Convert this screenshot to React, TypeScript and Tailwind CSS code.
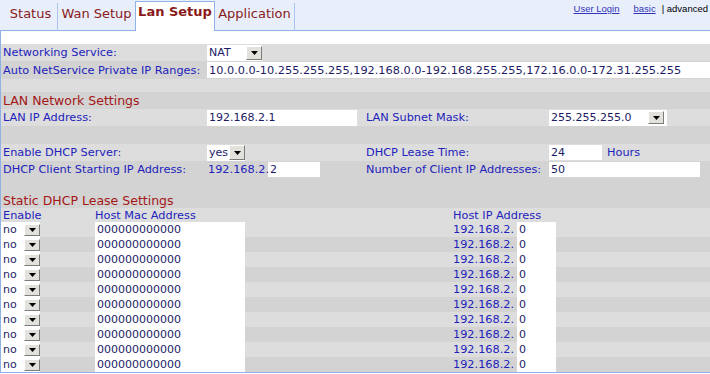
const LIGHT = "bg-[#dddddd]";
const DARK = "bg-[#d3d3d3]";

function Arrow({ h = "h-[14px]" }: { h?: string }) {
  return (
    <span className={"flex w-[16px] shrink-0 items-center justify-center border border-t-white border-l-white border-r-[#7c7c7c] border-b-[#7c7c7c] bg-[#e3e1dc] " + h}>
      <svg width="7" height="4" viewBox="0 0 7 4">
        <path d="M0 0h7L3.5 4z" fill="#000" />
      </svg>
    </span>
  );
}

function Select({ text, cls, arrow }: { text: string; cls: string; arrow?: string }) {
  return (
    <div className={"flex shrink-0 items-center justify-between bg-white pl-[2px] text-[#1c1c66] " + cls}>
      <span>{text}</span>
      <Arrow h={arrow} />
    </div>
  );
}

function Row({ cls, children }: { cls: string; children?: React.ReactNode }) {
  return <div className={"flex items-center " + cls}>{children}</div>;
}

function Label({ w, children }: { w: string; children: React.ReactNode }) {
  return <div className={"shrink-0 text-[11.3px] text-[#2222bb] " + w}>{children}</div>;
}

function Field({ w, h = "h-[16px]", children }: { w: string; h?: string; children?: React.ReactNode }) {
  return (
    <div className={"flex shrink-0 items-center bg-white pl-[2px] text-[#1c1c66] " + w + " " + h}>
      {children}
    </div>
  );
}

function TopBar() {
  return (
    <div className="flex h-[31px] border-b border-[#8fb2e6] bg-[#e8effb]">
      <div className="-mb-px flex items-end pl-[4px] font-['DejaVu_Sans',sans-serif] text-[13px] leading-[16px] text-[#8a1a1a]">
        <div className="h-[28px] w-[54px] border-r border-[#a9c4ee] pt-[3px] text-center">Status</div>
        <div className="h-[28px] w-[77px] pt-[3px] text-center">Wan Setup</div>
        <div className="h-[30px] w-[80px] border-x border-t border-[#8fb2e6] bg-white pt-[2px] text-center font-bold">Lan Setup</div>
        <div className="h-[28px] w-[80px] border-r border-[#a9c4ee] pt-[3px] text-center">Application</div>
      </div>
      <div className="ml-auto flex pr-[2px] pt-[3px] font-['Liberation_Sans',Arial,sans-serif] text-[9.5px] leading-[11px]">
        <span className="text-[#3333bb] underline">User Login</span>
        <span className="ml-[14px] text-[#3333bb] underline">basic</span>
        <span className="ml-[6px] text-black">| advanced</span>
      </div>
    </div>
  );
}

function LeaseRow({ bg }: { bg: string }) {
  return (
    <Row cls={"h-[15px] " + bg}>
      <Select text="no" cls="h-[15px] w-[39px]" arrow="h-[12px]" />
      <div className="w-[55px] shrink-0" />
      <Field w="w-[150px]" h="h-[15px]">000000000000</Field>
      <div className="w-[208px] shrink-0" />
      <Label w="w-[64px]">192.168.2.</Label>
      <Field w="w-[39px] pl-[1px]" h="h-[15px]">0</Field>
    </Row>
  );
}

export default function App() {
  const rows = [LIGHT, DARK, LIGHT, DARK, LIGHT, DARK, LIGHT, DARK, LIGHT, DARK];
  return (
    <div className="h-[374px] w-[710px] overflow-hidden bg-white font-['DejaVu_Sans',Verdana,sans-serif] text-[11px] leading-[13px]">
      <TopBar />
      <div className="border-b border-l border-[#8fb2e6]">
        <div className="h-[13px] bg-white" />

        <Row cls={"h-[17px] " + LIGHT}>
          <Label w="w-[206px] pl-[2px]">Networking Service:</Label>
          <Select text="NAT" cls="h-[16px] w-[55px]" />
        </Row>
        <Row cls={"h-[18px] " + DARK}>
          <Label w="w-[206px] pl-[2px]">Auto NetService Private IP Ranges:</Label>
          <Field w="flex-1 text-[11.3px]">10.0.0.0-10.255.255.255,192.168.0.0-192.168.255.255,172.16.0.0-172.31.255.255</Field>
        </Row>
        <Row cls={"h-[13px] " + LIGHT} />
        <Row cls={"h-[17px] " + DARK}>
          <div className="pl-[2px] text-[12.5px] text-[#a31616]">LAN Network Settings</div>
        </Row>
        <Row cls={"h-[17px] " + LIGHT}>
          <Label w="w-[206px] pl-[2px]">LAN IP Address:</Label>
          <Field w="w-[150px]">192.168.2.1</Field>
          <div className="w-[9px] shrink-0" />
          <Label w="w-[183px]">LAN Subnet Mask:</Label>
          <Select text="255.255.255.0" cls="h-[16px] w-[118px] pr-[3px]" arrow="h-[13px]" />
        </Row>
        <Row cls={"h-[18px] " + DARK} />
        <Row cls={"h-[17px] " + LIGHT}>
          <Label w="w-[206px] pl-[2px]">Enable DHCP Server:</Label>
          <Select text="yes" cls="h-[16px] w-[38px]" arrow="h-[15px]" />
          <div className="w-[121px] shrink-0" />
          <Label w="w-[183px]">DHCP Lease Time:</Label>
          <Field w="w-[53px]" h="h-[15px]">24</Field>
          <span className="ml-[5px] text-[11.3px] text-[#2222bb]">Hours</span>
        </Row>
        <Row cls={"h-[17px] " + DARK}>
          <Label w="w-[206px] pl-[2px]">DHCP Client Starting IP Address:</Label>
          <Label w="w-[61px] pl-[1px]">192.168.2.</Label>
          <Field w="w-[52px] pl-0" h="h-[15px]">2</Field>
          <div className="w-[46px] shrink-0" />
          <Label w="w-[183px]">Number of Client IP Addresses:</Label>
          <Field w="w-[151px]" h="h-[15px]">50</Field>
        </Row>
        <Row cls={"h-[14px] " + DARK} />
        <Row cls={"h-[16px] " + DARK}>
          <div className="pl-[2px] text-[12.5px] text-[#a31616]">Static DHCP Lease Settings</div>
        </Row>
        <Row cls={"h-[14px] " + LIGHT}>
          <Label w="w-[94px] pl-[2px]">Enable</Label>
          <Label w="w-[358px]">Host Mac Address</Label>
          <Label w="w-[150px]">Host IP Address</Label>
        </Row>
        {rows.map((bg, i) => (
          <LeaseRow key={i} bg={bg} />
        ))}
      </div>
    </div>
  );
}
